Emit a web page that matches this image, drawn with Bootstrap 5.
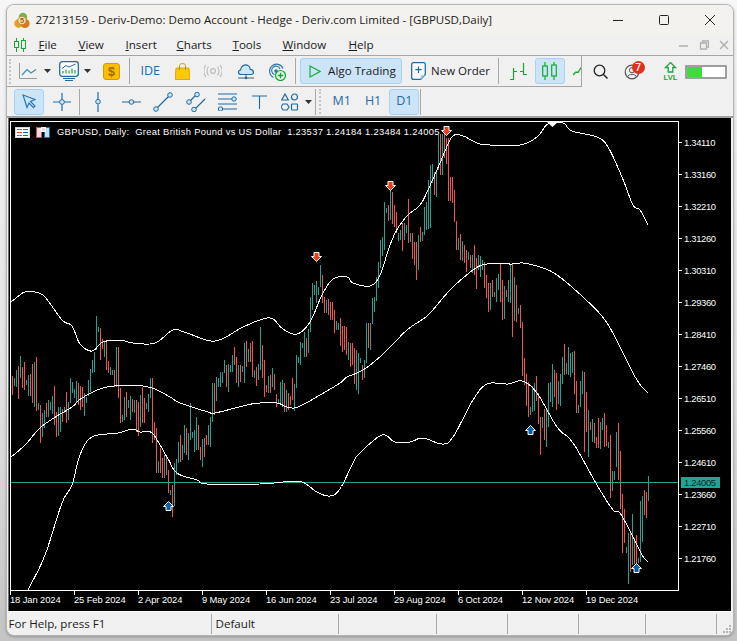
<!DOCTYPE html>
<html lang="en">
<head>
<meta charset="utf-8">
<title>MetaTrader</title>
<link href="https://cdn.jsdelivr.net/npm/bootstrap@5.3.0/dist/css/bootstrap.min.css" rel="stylesheet">
<style>
html,body{height:100%}
body{margin:0;width:737px;height:641px;overflow:hidden;background:linear-gradient(to bottom,#f7f7f7,#e2e2e2 60%,#c4c4c4 99%);font-family:"Open Sans","Noto Sans",sans-serif;color:#1b1b1b}
.app-win{position:relative;width:728px;height:632px;margin:4px 0 0 5.5px;background:#f0f0f0;border:1px solid #b4b4b4;border-radius:8px;overflow:hidden;box-shadow:0 1px 3px rgba(0,0,0,.25)}
.title-bar{height:30px;background:#f3f2ee;font-size:11.55px;padding-left:7px}
.win-ctl{width:46px;display:flex;justify-content:center}
.menu-bar{height:20px;font-size:11.6px;border-bottom:1px solid #a5a5a5;box-sizing:content-box}
.menu-bar u{text-underline-offset:1px}
.mi{display:block;color:#1b1b1b;text-decoration:none;flex:none}
.tool-row{height:31px;flex:none}
.tool-main{height:31px;width:575px;border-bottom:1px solid #a5a5a5;border-right:1px solid #a5a5a5;overflow:hidden;flex:none}
.tool-two{height:31px;border-bottom:2px solid #a0a0a0}
.grip{width:3px;height:25px;flex:none;border-left:2px dotted #c4c4c4}
.sep{width:1px;height:26px;background:#a8a8a8;flex:none}
.ti{flex:none;display:block}
.tbtn.btn{display:flex;align-items:center;justify-content:center;flex:none;padding:0;height:26px;border:1px solid #a9d2f2;border-radius:3px;background:#cce4f7;color:#1b1b1b;font-size:11.65px;line-height:1}
.tbtn.btn.tx-blue{color:#1f6aa5;font-size:12.5px}
.tx-blue{color:#1f6aa5;font-size:12.5px;flex:none;line-height:1}
.tx-dark{font-size:11.5px;flex:none;color:#1b1b1b}
.chart-wrap{height:493px;margin-left:1px;width:723px;border-left:1px solid #6f6f6f;flex:none;background:#000}
.chart-wrap svg{display:block}
.chart-wrap text{font-family:"Liberation Sans",sans-serif;font-size:9.4px;fill:#fff;white-space:pre}
.chart-wrap text.hdr-tx{letter-spacing:.3px}
.chart-wrap text.px-tx{letter-spacing:-.3px}
.chart-wrap text.dt-tx{letter-spacing:-.1px}
.status-bar{height:24px;font-size:11.6px;border-top:1px solid #fff;padding-top:1px}
.st-cell{height:20px;flex:none;padding-left:4px;line-height:20px;border-right:1px solid #a8a8a8}
.st-first{padding-left:2px}
.ml1{margin-left:1px}.ml2{margin-left:2px}.ml3{margin-left:3px}.ml4{margin-left:4px}.ml5{margin-left:5px}.ml6{margin-left:6px}.ml7{margin-left:7px}.ml8{margin-left:8px}.ml9{margin-left:9px}.ml10{margin-left:10px}.ml11{margin-left:11px}.ml12{margin-left:12px}.ml13{margin-left:13px}.ml14{margin-left:14px}.ml15{margin-left:15px}.ml16{margin-left:16px}.ml21{margin-left:21px}
.w30{width:30px}.w102{width:102px}
.m-file{width:40px}.m-view{width:47px}.m-insert{width:51px}.m-charts{width:56px}.m-tools{width:50px}.m-window{width:66px}.m-help{width:40px}
.c1{width:205px}.c2{width:127px}.c3{width:98px}.c4{width:71px}.c5{width:71px}.c6{width:67px}.c7{width:71px}
.grip-corner{position:absolute;right:2px;bottom:2px}
.badge-seven{width:13px;height:13px;right:-5px;top:-3px;background:#e0301e;font-size:10px;line-height:1}
</style>
</head>
<body>
<div class="app-win d-flex flex-column">
  <div class="title-bar d-flex align-items-center flex-none">
    <svg class="ti" width="16" height="17" viewBox="0 0 16 17"><circle cx="9" cy="5" r="4.2" fill="#7fb24a"/><circle cx="4.5" cy="11.5" r="4.2" fill="#e8a020"/><circle cx="11" cy="11.5" r="4.6" fill="#d97a16"/><circle cx="8" cy="8.5" r="4.2" fill="#f1e3b0" stroke="#a9762a" stroke-width=".7"/><text x="8" y="11.2" font-size="7.5" font-weight="700" text-anchor="middle" fill="#b0591a" font-family="Liberation Sans">5</text></svg>
    <span class="ml6 flex-grow-1">27213159 - Deriv-Demo: Demo Account - Hedge - Deriv.com Limited - [GBPUSD,Daily]</span>
    <div class="win-ctl"><svg width="10" height="10"><path d="M0 5.5H10" stroke="#222"/></svg></div>
    <div class="win-ctl"><svg width="10" height="10"><rect x=".5" y=".5" width="9" height="9" rx="1" fill="none" stroke="#222"/></svg></div>
    <div class="win-ctl"><svg width="10" height="10"><path d="M0 0L10 10M10 0L0 10" stroke="#222"/></svg></div>
  </div>
  <nav class="menu-bar d-flex align-items-center">
    <svg class="ti ml7" width="12" height="14" viewBox="0 0 12 14"><g fill="none" stroke="#16a82e"><path d="M2.5 0V14M9.5 0V14"/><rect x=".5" y="3.5" width="4" height="6" fill="#f0f0f0"/><rect x="7.5" y="2.5" width="4" height="8" fill="#f0f0f0"/></g></svg>
    <a class="mi m-file ml13" href="#"><u>F</u>ile</a><a class="mi m-view" href="#"><u>V</u>iew</a><a class="mi m-insert" href="#"><u>I</u>nsert</a><a class="mi m-charts" href="#"><u>C</u>harts</a><a class="mi m-tools" href="#"><u>T</u>ools</a><a class="mi m-window" href="#"><u>W</u>indow</a><a class="mi m-help" href="#"><u>H</u>elp</a>
    <div class="ms-auto d-flex align-items-center gap-2 pe-1">
      <svg width="9" height="9"><path d="M0 5H9" stroke="#b0b0b0" stroke-width="1.4"/></svg>
      <svg class="ml3" width="10" height="10"><path d="M1.5 3H7.5V9H1.5ZM3.5 3V1H9.5V7H7.5" fill="none" stroke="#b0b0b0" stroke-width="1.3"/></svg>
      <svg class="ml2" width="10" height="10"><path d="M1 1L9 9M9 1L1 9" stroke="#b0b0b0" stroke-width="1.4"/></svg>
    </div>
  </nav>
  <div class="tool-row d-flex">
    <div class="tool-main d-flex align-items-center">
      <div class="grip ml2"></div>
      <svg class="ti ml7" width="18" height="18" viewBox="0 0 18 18"><path d="M.5 1V16.5H18" fill="none" stroke="#9a9a9a"/><path d="M3 13L8 7.5L12 11L17 7.5" fill="none" stroke="#3f8cc4" stroke-width="1.2"/></svg>
      <svg class="ti ml7" width="7" height="4"><path d="M0 0H7L3.5 4Z" fill="#333"/></svg>
      <svg class="ti ml8" width="20" height="20" viewBox="0 0 20 20"><rect x=".7" y=".7" width="18.6" height="14.6" rx="2.5" fill="#fff" stroke="#1f6aa5" stroke-width="1.3"/><path d="M3 7.5L7 4.5L10 6L16.5 3" fill="none" stroke="#1f6aa5"/><path d="M4 12.5V10M7 12.5V8.5M10 12.5V9.5M13 12.5V7.5M16 12.5V9" stroke="#1fa83c" stroke-width="1.2"/><path d="M4 17.5H16M6 19.5H14" stroke="#1f6aa5" stroke-width="1.2"/></svg>
      <svg class="ti ml5" width="7" height="4"><path d="M0 0H7L3.5 4Z" fill="#333"/></svg>
      <svg class="ti ml12" width="17" height="17" viewBox="0 0 17 17"><rect x=".5" y=".5" width="16" height="16" rx="2.5" fill="#fcbf00" stroke="#d59c00"/><text x="8.5" y="13" font-size="12.5" font-weight="700" text-anchor="middle" fill="#a06a00" font-family="Liberation Sans">$</text></svg>
      <div class="sep ml9"></div>
      <span class="tx-blue ml11">IDE</span>
      <svg class="ti ml15" width="15" height="18" viewBox="0 0 15 18"><path d="M1 6H14L15 17.5H0Z" fill="#fdc80a" stroke="#cf9d00" stroke-width=".8"/><path d="M4.5 8V3.5C4.5 1 10.5 1 10.5 3.5V8" fill="none" stroke="#c08f00"/></svg>
      <svg class="ti ml14" width="18" height="14" viewBox="0 0 18 14"><g fill="none" stroke="#bdbdbd" stroke-width="1.2"><circle cx="9" cy="7" r="2.4"/><path d="M4.5 2.5C2.5 5 2.5 9 4.5 11.5M13.5 2.5C15.5 5 15.5 9 13.5 11.5M1.8 1C-.6 4.5-.6 9.5 1.8 13M16.2 1C18.6 4.5 18.6 9.5 16.2 13"/></g></svg>
      <svg class="ti ml15" width="18" height="17" viewBox="0 0 18 17"><path d="M4 11.5C1 11.5.5 7.5 3.5 7C3.5 3.5 7.5 .5 11 2.5C12.5 3.2 13.2 5 13.3 6.3C16.8 6.3 18 11.5 14 11.5Z" fill="#cfe6f7" stroke="#1f6aa5" stroke-width="1.2"/><path d="M9 11.5V15M1 15H17" stroke="#1f6aa5"/><circle cx="9" cy="15" r="1.3" fill="#1f6aa5"/></svg>
      <svg class="ti ml12" width="19" height="19" viewBox="0 0 19 19"><g fill="none" stroke="#2a78b0" stroke-width="1.1"><path d="M6.5 15.5A7 7 0 1 1 16 6.5"/><path d="M7.5 12.5A4.3 4.3 0 1 1 13 7"/></g><circle cx="9" cy="9" r="1.8" fill="#2a78b0"/><circle cx="13.5" cy="13.5" r="5" fill="#e6f7e8" stroke="#15a534" stroke-width="1.2"/><path d="M13.5 10.8V16.2M10.8 13.5H16.2" stroke="#15a534" stroke-width="1.3"/></svg>
      <div class="sep ml9"></div>
      <button class="tbtn btn w102 ml4 justify-content-start" type="button">
        <svg class="ti ml8" width="12" height="13" viewBox="0 0 12 13"><path d="M1 1L11 6.5L1 12Z" fill="none" stroke="#19ae3c" stroke-width="1.2"/></svg>
        <span class="ml7">Algo Trading</span>
      </button>
      <svg class="ti ml9" width="15" height="18" viewBox="0 0 15 18"><path d="M9.5 17.5H2.5Q.7 17.5.7 15.7V2.5Q.7.7 2.5.7H12.5Q14.3.7 14.3 2.5V12.5Z" fill="#fff" stroke="#1f6aa5" stroke-width="1.3"/><path d="M14 13L9.5 17.5V13Z" fill="#a8cde8"/><path d="M7.5 4.5V11M4.3 7.7H10.7" stroke="#1f6aa5" stroke-width="1.2"/></svg>
      <span class="tx-dark ml5">New Order</span>
      <div class="sep ml8"></div>
      <svg class="ti ml11" width="17" height="17" viewBox="0 0 17 17"><path d="M3.5 5V17M0 16.5H3.5M3.5 8.5H7M13.5 0V12M10 8.5H13.5M13.5 11.5H17" fill="none" stroke="#16a82e" stroke-width="1.2"/></svg>
      <button class="tbtn btn w30 ml8" type="button"><svg width="15" height="18" viewBox="0 0 15 18"><g fill="none" stroke="#16a82e" stroke-width="1.2"><path d="M3 0V18M12 0V18"/><rect x=".7" y="4" width="4.6" height="10" fill="#cce4f7"/><rect x="9.7" y="3" width="4.6" height="11" fill="#cce4f7"/></g></svg></button>
      <svg class="ti ml8" width="8" height="10" viewBox="0 0 8 10"><path d="M0 9L3 6L5 6.5L8 1.5" fill="none" stroke="#16a82e" stroke-width="1.3"/></svg>
    </div>
    <div class="d-flex align-items-center flex-grow-1">
      <svg class="ti ml11" width="15" height="15" viewBox="0 0 15 15"><circle cx="6.5" cy="6.5" r="5.3" fill="none" stroke="#222" stroke-width="1.3"/><path d="M10.2 10.2L14.5 14.5" stroke="#222" stroke-width="1.5"/></svg>
      <div class="position-relative ti ml16"><svg class="d-block" width="16" height="16" viewBox="0 0 16 16"><circle cx="8" cy="8" r="6.8" fill="none" stroke="#555" stroke-width="1.2"/><circle cx="8" cy="6.2" r="2.6" fill="none" stroke="#555"/><path d="M3.5 13C4.5 9.5 11.5 9.5 12.5 13" fill="none" stroke="#555"/></svg><span class="badge-seven position-absolute d-flex align-items-center justify-content-center rounded-circle text-white fw-semibold">7</span></div>
      <svg class="ti ml21" width="19" height="19" viewBox="0 0 19 19"><path d="M9.5 .5L14.5 5.5H11.8V10H7.2V5.5H4.5Z" fill="#fff" stroke="#18a638" stroke-width="1.3"/><text x="9.5" y="18" font-size="7.6" font-weight="700" text-anchor="middle" fill="#18a638" font-family="Liberation Sans">LVL</text></svg>
      <svg class="ti ml5" width="42" height="14"><rect x="1" y="1" width="40" height="12" fill="#fff" stroke="#8a8a8a" stroke-width="1.6"/><rect x="2" y="2" width="15" height="10" fill="#3fdc3f"/></svg>
    </div>
  </div>
  <div class="tool-two d-flex align-items-center">
    <button class="tbtn btn w30 ml7" type="button"><svg width="14" height="15" viewBox="0 0 14 15"><path d="M1 1L13 5.5L8.5 7.5L13 12L11.5 13.7L7 9L5 13.5Z" fill="none" stroke="#2a78b0" stroke-width="1.2"/></svg></button>
    <svg class="ti ml9" width="18" height="18" viewBox="0 0 18 18"><path d="M0 9H6.5M11.5 9H18M9 0V6.5M9 11.5V18" stroke="#1f6aa5" stroke-width="1.2"/><circle cx="9" cy="9" r="2.4" fill="#cfe6f7" stroke="#1f6aa5"/></svg>
    <div class="sep ml8"></div>
    <svg class="ti ml15" width="6" height="20" viewBox="0 0 6 20"><path d="M3 0V7M3 12.5V20" stroke="#1f6aa5" stroke-width="1.2"/><circle cx="3" cy="9.7" r="2.3" fill="#cfe6f7" stroke="#1f6aa5"/></svg>
    <svg class="ti ml21" width="19" height="6" viewBox="0 0 19 6"><path d="M0 3H7M12 3H19" stroke="#1f6aa5" stroke-width="1.2"/><circle cx="9.5" cy="3" r="2.3" fill="#cfe6f7" stroke="#1f6aa5"/></svg>
    <svg class="ti ml12" width="20" height="20" viewBox="0 0 20 20"><path d="M4 16L16 4" stroke="#1f6aa5" stroke-width="1.2"/><circle cx="3" cy="17" r="2.3" fill="#cfe6f7" stroke="#1f6aa5"/><circle cx="17" cy="3" r="2.3" fill="#cfe6f7" stroke="#1f6aa5"/></svg>
    <svg class="ti ml13" width="20" height="20" viewBox="0 0 20 20"><path d="M4 9L9.5 3.5M9 17L19 7" stroke="#1f6aa5" stroke-width="1.2"/><circle cx="3" cy="10" r="2.3" fill="#cfe6f7" stroke="#1f6aa5"/><circle cx="11" cy="2.5" r="2.3" fill="#cfe6f7" stroke="#1f6aa5"/><circle cx="8" cy="17.5" r="2.3" fill="#cfe6f7" stroke="#1f6aa5"/></svg>
    <svg class="ti ml12" width="19" height="18" viewBox="0 0 19 18"><path d="M0 1H19M0 6H14M0 11H19M5 16H19" stroke="#1f6aa5" stroke-width="1.2"/><circle cx="16" cy="6" r="2.2" fill="#cfe6f7" stroke="#1f6aa5"/><circle cx="2.5" cy="16" r="2.2" fill="#cfe6f7" stroke="#1f6aa5"/></svg>
    <svg class="ti ml15" width="15" height="14" viewBox="0 0 15 14"><path d="M0 1H15M7.5 1V14" stroke="#1f6aa5" stroke-width="1.1"/></svg>
    <svg class="ti ml14" width="18" height="18" viewBox="0 0 18 18"><g fill="none" stroke="#1f6aa5" stroke-width="1.2"><path d="M4 1L7.3 7H.7Z"/><circle cx="13.5" cy="4" r="3"/><path d="M2 11H6L8 14L6 17H2L0 14Z"/><rect x="10.5" y="11" width="6" height="6" rx=".8"/></g></svg>
    <svg class="ti ml6" width="7" height="4"><path d="M0 0H7L3.5 4Z" fill="#333"/></svg>
    <div class="sep ml3"></div>
    <div class="grip ml3"></div>
    <span class="tx-blue ml11">M1</span>
    <span class="tx-blue ml14">H1</span>
    <button class="tbtn btn w30 ml8 tx-blue" type="button">D1</button>
    <div class="sep ml1"></div>
  </div>
  <div class="chart-wrap">
    <svg id="chart" width="722" height="493" viewBox="9 118 722 493" xmlns="http://www.w3.org/2000/svg">
      <defs><clipPath id="plot"><rect x="11" y="122" width="667" height="468"/></clipPath></defs>
      <g id="plotg" clip-path="url(#plot)"></g>
      <rect x="10.5" y="121.5" width="668" height="469" fill="none" stroke="#fff" shape-rendering="crispEdges"/>
      <g id="axes"></g>
      <g shape-rendering="crispEdges">
        <rect x="15.5" y="127.5" width="14" height="10" fill="#fff" stroke="#d9d9d9"/>
        <path d="M17 129.5H22M17 132.5H22M17 135.5H22" stroke="#e8483a"/><path d="M23 129.5H28M23 132.5H28M23 135.5H28" stroke="#1f6aa5"/>
        <path d="M36.5 127.5H41.5V137.5H36.5Z" fill="#fde" stroke="#e8483a"/><path d="M44.5 127.5H49.5V137.5H44.5Z" fill="#bfe0f7" stroke="#1f6aa5"/><path d="M41 127.5H45V131.5H41Z" fill="#ddd" stroke="#fff"/>
      </g>
      <text class="hdr-tx" x="57" y="135.3">GBPUSD, Daily:  Great British Pound vs US Dollar  1.23537 1.24184 1.23484 1.24005</text>
    </svg>
  </div>
  <div class="status-bar d-flex align-items-center position-relative">
    <div class="st-cell c1 st-first">For Help, press F1</div><div class="st-cell c2">Default</div><div class="st-cell c3"></div><div class="st-cell c4"></div><div class="st-cell c5"></div><div class="st-cell c6"></div><div class="st-cell c7"></div>
    <svg class="grip-corner" width="8" height="8"><g fill="#b5b5b5"><rect x="6" y="0" width="2" height="2"/><rect x="3" y="3" width="2" height="2"/><rect x="6" y="3" width="2" height="2"/><rect x="0" y="6" width="2" height="2"/><rect x="3" y="6" width="2" height="2"/><rect x="6" y="6" width="2" height="2"/></g></svg>
  </div>
</div>
<script>
(function(){
var G='#22a396',R='#f2554d',paths={G:'',R:''};
function sec(ox,oy,s,k){k=k||3;s.trim().split(/\s+/).forEach(function(t){var m=t.match(/^(\d+)([GR])(\d+)-(\d+)$/);var x=Math.round(ox+(+m[1])/k);paths[m[2]]+='M'+(x+.5)+' '+Math.round(oy+(+m[3])/k)+'V'+Math.round(oy+(+m[4])/k);});}
sec(10,310,'6R198-255 12G204-228 18G180-230 24R168-267 30G138-205 36R172-235 42R155-240 48G210-225 54G195-257 60R192-258 66R162-278 72G155-290 78R140-303 84G278-300 90R285-398 96G310-380 102G300-355 108R280-320 114G270-320 120G275-300 126G258-312 132R228-345 138R305-382 144G292-378 150G292-365 156R298-335 162G292-310 168R245-340 174G275-330 180G205-280 186G215-250 192G238-265 198G213-280 204R218-285 210R228-300 216R232-290 222G250-318 228G262-280 234G210-258 240G178-245 246G150-190 252G125-185 258G18-120 264G50-65 270R55-150 276R88-118 282G95-140 288R90-180 294R152-190 300G170-195 306G180-195 312R180-232 318G112-232 324R112-265 330R235-340 336G315-335 342G260-330 348R245-320 354G270-295 360G258-330 366R268-305 372G270-310 378R270-365 384R275-378 390G255-352 396R232-340 402R265-340 408G280-298 414G252-305 420G205-265 426R205-400 432R335-390 438R355-490 444G452-488 450R415-490 456R445-505 462G435-505 468R440-495 474R480-550 480G540-555 486R525-620 492G460-588 498G448-495 504G395-460');
sec(170,250,'30R555-635 36G585-630 42G525-610 48R535-615 54G548-630 60G460-570 66G545-565 72G540-605 78G500-600 84R525-600 90R590-630 96G568-652 102R565-620 108R555-585 114G525-585 120G500-590 126G400-515 132R398-495 138G380-452 144G385-410 150G365-410 156G365-400 162G330-370 168R345-412 174G342-425 180G345-365 186G315-365 192R292-345 198R322-398 204G345-412 210R345-395 216G348-365 222G280-400 228R272-350 234G298-335 240R280-335 246R272-382 252G360-385 258R352-408 264G342-390 270G232-360 276R285-385 282R330-440 288R405-425 294G378-430 300R375-430 306G355-412 312R372-420 318R432-472 324G448-462 330G395-465 336G390-470 342R398-485 348G420-485 354R430-480 360R437-465 366R385-450 372G402-483 378G315-415 384G322-340 390G275-345 396G278-295 402G245-320 408R265-320 414G238-310 420G140-245 426G98-180 432G105-135 438G92-160 444G110-135 450G45-110 456R75-158 462R140-190 468G150-190 474R148-195 480R155-210 486R155-210 492R180-250 498G213-240 504G218-240');
sec(0,0,'340R318-346 342R326-352 344R326-350 346R327-355 348G342-360 350R343-367 352R343-365 354R348-384 356G350-390 358G353-394 360G358-363 362R365-380 364G360-378 366G323-363 368R323-348 370G323-350',1);
sec(340,125,'96G518-598 102G515-560 108G455-528 114G410-490 120G345-430 126G335-392 132G232-375 138G248-265 144R240-288 150G195-285 156R200-297 162R240-305 168R262-325 174G325-348 180G315-345 186R295-378 192G295-345 198G300-325 204R222-355 210G325-352 216R325-402 222R352-420 228R350-465 234G330-435 240R305-350 246G320-348 252G245-330 258G230-315 264G165-312 270G120-310 276G118-175 282R140-210 288G140-215 294G30-135 300R28-150 306G28-150 312R25-100 318R40-118 324R38-228 330R155-228 336R155-235 342R195-290 348R288-375 354G338-375 360R328-405 366G348-408 372R360-415 378R375-442 384G380-405 390R390-430 396G390-445 402R360-450 408R398-492 414G390-435');
sec(480,250,'0G18-80 6G30-60 12R35-115 18R75-145 24R100-185 30G100-180 36R90-140 42G125-140 48G85-155 54G72-120 60R42-155 66R90-210 72G108-208 78R120-142 84G90-155 90G42-160 96R40-260 102G82-212 108R105-215 114G175-192 120R165-235 126R215-378 132R325-405 138R372-468 144R395-500 150G470-495 156G408-485 162G398-482 168R378-452 174R430-522 180R500-615 186G500-535 192R478-570 198G478-590 204G398-530 210G395-455 216G342-470 222R360-442 228R368-480 234G392-462 240G372-468 246G320-402 252R282-375 258G340-372 264G292-375 270G310-380 276G305-370 282R302-432 288R392-490 294G465-488 300G392-472 306G362-432 312R365-605 318R425-545 324G480-622 330R515-540 336G508-575 342R518-578 348R560-595 354R505-595 360G515-598 366G505-540 372R488-592 378R525-588 384G575-595 390R555-745 396G662-722 402G662-690 408G545-652 414R520-690 420R603-778 426R733-910 432R778-880 438G890-910 444G848-1002 450R850-965 456G792-945 462R865-942 468R855-945 474G925-940 480G752-935 486G738-875 492R720-795 498R725-805 504G678-752');
var bands=[
'11,302 20,295 25,292 35,292 45,297 62,320 72,326 80,344 92,351 103,342 120,340 133,343 155,343 173,330 187,333 215,341 243,327 263,319 273,319 283,329 297,334 310,322 322,295 333,279 347,277 353,283 370,286 380,275 390,245 398,228 408,215 420,205 428,190 440,163 452,137 463,136 477,143 490,145 520,145 537,137 548,124 563,123 572,131 597,137 608,147 622,177 633,205 640,210 648,225',
'11,457 25,445 40,428 57,416 72,407 82,398 103,388 130,385 152,388 170,397 180,403 208,412 215,413 247,405 260,403 277,403 287,407 298,407 320,395 340,383 347,377 363,370 382,355 407,330 428,315 450,290 473,270 487,264 512,264 523,263 540,267 557,275 583,297 605,320 620,347 637,380 648,393',
'28,590 45,555 62,503 72,485 80,455 92,437 118,433 132,429 140,432 152,433 167,457 177,473 197,480 207,484 260,484 283,482 302,482 317,492 330,496 340,489 353,463 360,453 382,435 395,442 410,442 423,438 442,444 453,437 473,400 487,384 508,384 522,381 537,393 557,427 573,443 597,485 613,510 620,513 633,537 642,555 648,562'];
function smooth(b){var p=b.split(' ').map(function(s){return s.split(',').map(Number);}),o=[];
for(var i=0;i<p.length-1;i++){var a=p[Math.max(i-1,0)],c=p[i],d=p[i+1],e=p[Math.min(i+2,p.length-1)];
for(var j=0;j<8;j++){var t=j/8,t2=t*t,t3=t2*t;o.push([0,1].map(function(k){return (0.5*(2*c[k]+(d[k]-a[k])*t+(2*a[k]-5*c[k]+4*d[k]-e[k])*t2+(3*c[k]-a[k]-3*d[k]+e[k])*t3)).toFixed(1);}).join(','));}}
o.push(p[p.length-1].join(','));return o.join(' ');}
var h='<path d="'+paths.G+'" stroke="'+G+'" fill="none" shape-rendering="crispEdges"/><path d="'+paths.R+'" stroke="'+R+'" fill="none" shape-rendering="crispEdges"/>';
h+='<path d="M11 482.5H678" stroke="'+G+'" shape-rendering="crispEdges"/>';
bands.forEach(function(b){h+='<polyline points="'+smooth(b)+'" fill="none" stroke="#fff" stroke-width="1" shape-rendering="crispEdges"/>';});
function dn(x,y,c){x+=.5;return '<path d="M'+(x-2.5)+' '+(y-4.5)+'H'+(x+2.5)+'V'+(y-.5)+'H'+(x+5)+'L'+x+' '+(y+4.5)+'L'+(x-5)+' '+(y-.5)+'H'+(x-2.5)+'Z" fill="'+c+'" stroke="#fff" stroke-width="1"/><path d="M'+(x-1.5)+' '+(y-3.5)+'H'+(x+1.5)+'V'+(y+.5)+'H'+(x+3)+'L'+x+' '+(y+3.5)+'L'+(x-3)+' '+(y+.5)+'H'+(x-1.5)+'Z" fill="'+c+'"/>';}
function up(x,y,c){x+=.5;return '<path d="M'+(x-2.5)+' '+(y+4.5)+'H'+(x+2.5)+'V'+(y+.5)+'H'+(x+5)+'L'+x+' '+(y-4.5)+'L'+(x-5)+' '+(y+.5)+'H'+(x-2.5)+'Z" fill="'+c+'" stroke="#fff" stroke-width="1"/>';}
h+=dn(316,257,'#e8401c')+dn(390,186,'#e8401c')+dn(446,131,'#e8401c')+up(168,506,'#0a5fa8')+up(530,430,'#0a5fa8')+up(636,568,'#0a5fa8')+'<path d="M547 122H558L552.5 127Z" fill="#fff"/>';
document.getElementById('plotg').innerHTML=h;
var a='',p=['1.34110','1.33160','1.32210','1.31260','1.30310','1.29360','1.28410','1.27460','1.26510','1.25560','1.24610','1.23660','1.22710','1.21760'];
p.forEach(function(t,i){var y=142+i*32;a+='<path d="M679 '+(y+.5)+'H682" stroke="#fff" shape-rendering="crispEdges"/><text class="px-tx" x="684" y="'+(y+3.5)+'">'+t+'</text>';});
a+='<rect x="681" y="477" width="39" height="11" fill="#22a396"/><text class="px-tx" x="684" y="486" style="fill:#062a26">1.24005</text>';
['18 Jan 2024','25 Feb 2024','2 Apr 2024','9 May 2024','16 Jun 2024','23 Jul 2024','29 Aug 2024','6 Oct 2024','12 Nov 2024','19 Dec 2024'].forEach(function(t,i){var x=10+i*64;a+='<path d="M'+(x+.5)+' 591V595" stroke="#fff" shape-rendering="crispEdges"/><text class="dt-tx" x="'+x+'" y="603">'+t+'</text>';});
document.getElementById('axes').innerHTML=a;
})();
</script>
<script src="https://cdn.jsdelivr.net/npm/bootstrap@5.3.0/dist/js/bootstrap.bundle.min.js"></script>
</body>
</html>
